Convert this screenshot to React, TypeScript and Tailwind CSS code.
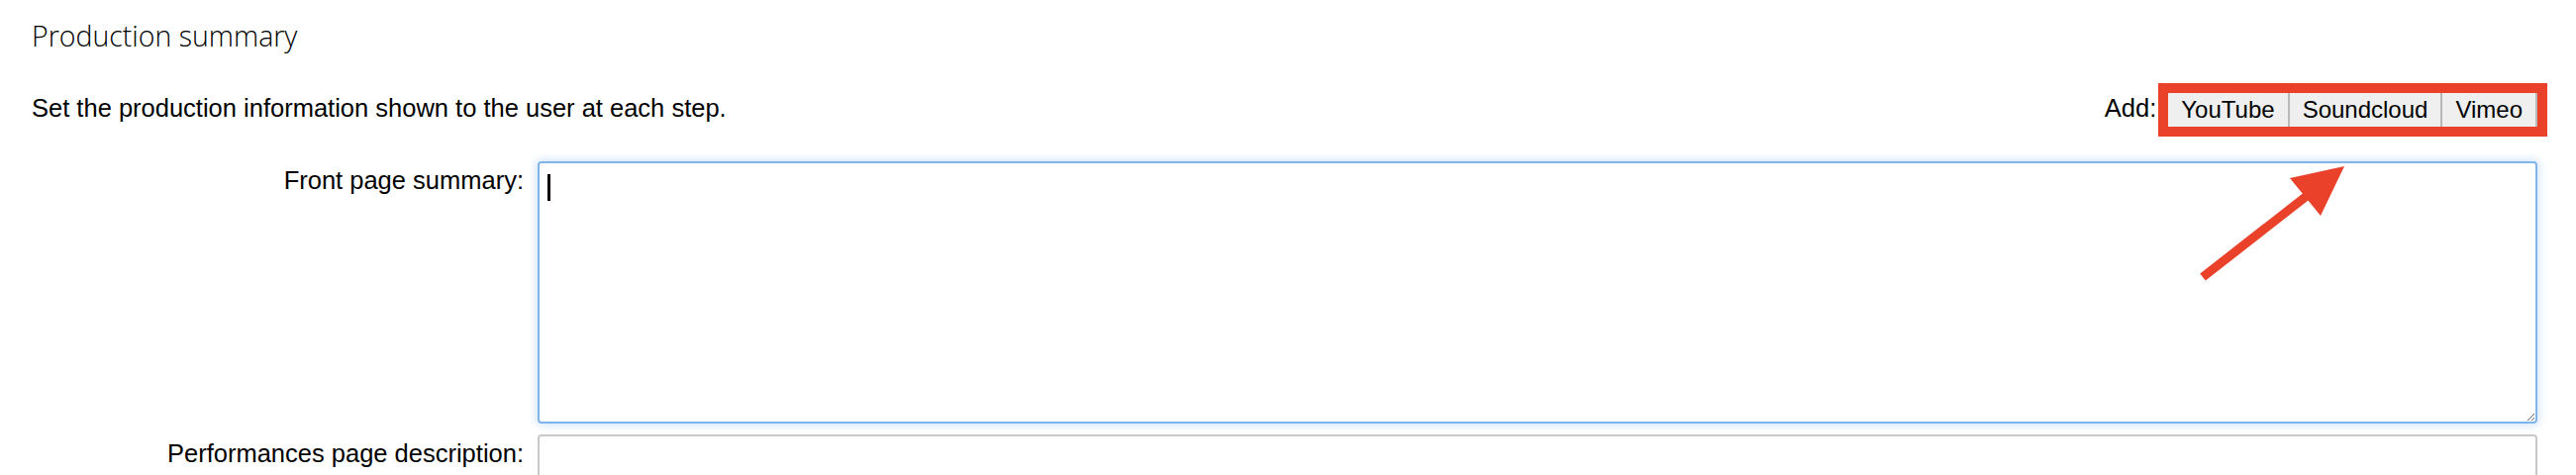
import React from "react";

const sans = { fontFamily: '"Liberation Sans", Arial, sans-serif' };

const MediaButton = ({ label }: { label: string }) => (
  <button
    type="button"
    className="h-[34px] bg-[#efefef] px-[13px] text-[24px] leading-[26px] text-black border-r-2 border-[#b8b8b8]"
  >
    {label}
  </button>
);

export default function App() {
  return (
    <div className="relative w-[2602px] h-[480px] overflow-hidden bg-white text-black" style={sans}>
      <div className="pl-[32px] pr-[39px] pt-[18px]">
        <h1
          className="text-[28.5px] font-light leading-[36px] text-black"
          style={{ fontFamily: '"Open Sans", sans-serif' }}
        >
          Production summary
        </h1>

        <div className="mt-[40px] flex items-start justify-between">
          <p className="text-[25.5px] leading-[30px]">Set the production information shown to the user at each step.</p>
          <div className="flex items-start gap-[12px]">
            <span className="text-[25.5px] leading-[30px]">Add:</span>
            <div className="flex outline-[10px] outline-solid outline-[#e9412a]">
              <MediaButton label="YouTube" />
              <MediaButton label="Soundcloud" />
              <MediaButton label="Vimeo" />
            </div>
          </div>
        </div>

        <div className="mt-[35px] grid grid-cols-[497px_1fr] gap-x-[14px] gap-y-[11px] text-[25.5px] leading-[30px]">
          <label className="pt-[4px] text-right">Front page summary:</label>
          <div className="relative">
            <textarea className="block h-[265px] w-full rounded-[4px] border-2 border-[#80b4ec] bg-white shadow-[0_0_8px_2px_#d3e5f9] outline-none" />
            <span className="absolute left-[10px] top-[13px] h-[27px] w-[3px] bg-black" />
          </div>

          <label className="pt-[4px] text-right">Performances page description:</label>
          <div className="h-[60px] rounded-[4px] border-2 border-[#c8c8c8] bg-white" />
        </div>
      </div>

      <svg className="absolute left-0 top-0 pointer-events-none" width="2602" height="480">
        <line x1="2225" y1="280" x2="2330" y2="198" stroke="#e9412a" strokeWidth="9" />
        <polygon points="2368,168 2313,180 2344,218" fill="#e9412a" />
      </svg>
    </div>
  );
}
